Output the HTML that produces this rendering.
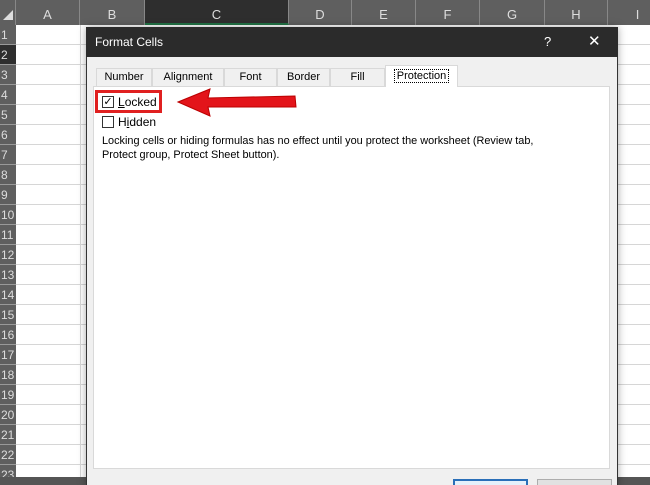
<!DOCTYPE html>
<html><head><style>
*{margin:0;padding:0;box-sizing:border-box}
html,body{width:650px;height:485px;overflow:hidden}
body{background:#fff;font-family:"Liberation Sans",sans-serif;position:relative}
.abs{position:absolute}
.ch{position:absolute;top:0;height:25px;background:#5f5f5f;color:#ddd;font-size:13px;text-align:center;line-height:30px;border-right:1px solid #888}
.rh{position:absolute;left:0;width:16px;height:20px;background:#5f5f5f;color:#ddd;font-size:12px;line-height:20px;border-bottom:1px solid #999;padding-left:1px}
.hl{position:absolute;left:16px;right:0;height:1px;background:#d6d6d6}
.vl{position:absolute;top:25px;bottom:0;width:1px;background:#d6d6d6}
.tab{position:absolute;top:68px;height:18px;border:1px solid #d9d9d9;border-bottom:none;background:#f0f0f0;font-size:11px;line-height:17px;text-align:center;color:#000}
</style></head><body>
<div class="abs" style="left:0;top:0;width:650px;height:25px;background:#5f5f5f"></div>
<div class="ch" style="left:0;width:16px"></div>
<div class="ch" style="left:16px;width:64px">A</div>
<div class="ch" style="left:80px;width:65px">B</div>
<div class="ch" style="left:145px;width:144px;background:#2e2e2e;border-bottom:2px solid #217346">C</div>
<div class="ch" style="left:289px;width:63px">D</div>
<div class="ch" style="left:352px;width:64px">E</div>
<div class="ch" style="left:416px;width:64px">F</div>
<div class="ch" style="left:480px;width:65px">G</div>
<div class="ch" style="left:545px;width:63px">H</div>
<div class="ch" style="left:608px;width:60px">I</div>
<div class="abs" style="left:3px;top:10px;width:0;height:0;border-left:10px solid transparent;border-bottom:10px solid #ddd"></div>

<div class="vl" style="left:80px"></div>
<div id="rows"></div>
<script>
var h='';for(var i=1;i<=23;i++){var t=25+(i-1)*20;h+='<div class="rh" style="top:'+t+'px;'+(i==2?'background:#2e2e2e;':'')+'">'+i+'</div><div class="hl" style="top:'+(t+19)+'px"></div>';}
document.getElementById('rows').innerHTML=h;
</script>
<div class="abs" style="left:0;top:477px;width:650px;height:8px;background:#555"></div>

<div class="abs" style="left:86px;top:27px;width:532px;height:460px;background:#f0f0f0;box-shadow:0 0 8px rgba(0,0,0,.35);border:1px solid #333"></div>
<div class="abs" style="left:86px;top:27px;width:532px;height:30px;background:#2b2b2b;color:#fff;font-size:12px;line-height:30px;padding-left:9px">Format Cells
<span class="abs" style="left:458px;top:0;font-size:13px">?</span>
<span class="abs" style="left:502px;top:0;font-size:15px">✕</span></div>
<div class="abs" style="left:93px;top:86px;width:517px;height:383px;background:#fff;border:1px solid #d9d9d9"></div>
<div class="tab" style="left:96px;width:56px">Number</div>
<div class="tab" style="left:152px;width:72px">Alignment</div>
<div class="tab" style="left:224px;width:53px">Font</div>
<div class="tab" style="left:277px;width:53px">Border</div>
<div class="tab" style="left:330px;width:55px">Fill</div>
<div class="tab" style="left:385px;top:65px;height:22px;width:73px;background:#fff;line-height:20px"><span style="border:1px dotted #000;padding:0 2px">Protection</span></div>

<div class="abs" style="left:95px;top:90px;width:67px;height:23px;border:3px solid #e02020"></div>
<div class="abs" style="left:102px;top:96px;width:12px;height:12px;border:1px solid #333;font-size:11px;line-height:10px;text-align:center">✓</div>
<div class="abs" style="left:118px;top:95px;font-size:12px"><u>L</u>ocked</div>
<div class="abs" style="left:102px;top:116px;width:12px;height:12px;border:1px solid #333;background:#fff"></div>
<div class="abs" style="left:118px;top:115px;font-size:12px">H<u>i</u>dden</div>
<div class="abs" style="left:102px;top:134px;font-size:10.9px;line-height:14px;color:#000;width:475px">Locking cells or hiding formulas has no effect until you protect the worksheet (Review tab,<br>Protect group, Protect Sheet button).</div>

<svg class="abs" style="left:170px;top:86px" width="135" height="32"><path d="M8 16 L40 3 L38 12 L125 10 L126 21 L38 21 L40 30 Z" fill="#e3141a" stroke="#b00" stroke-width="1"/></svg>

<div class="abs" style="left:453px;top:479px;width:75px;height:20px;border:2px solid #2a6fb8;background:#e5f1fb"></div>
<div class="abs" style="left:537px;top:479px;width:75px;height:20px;border:1px solid #adadad;background:#e1e1e1"></div>
</body></html>
